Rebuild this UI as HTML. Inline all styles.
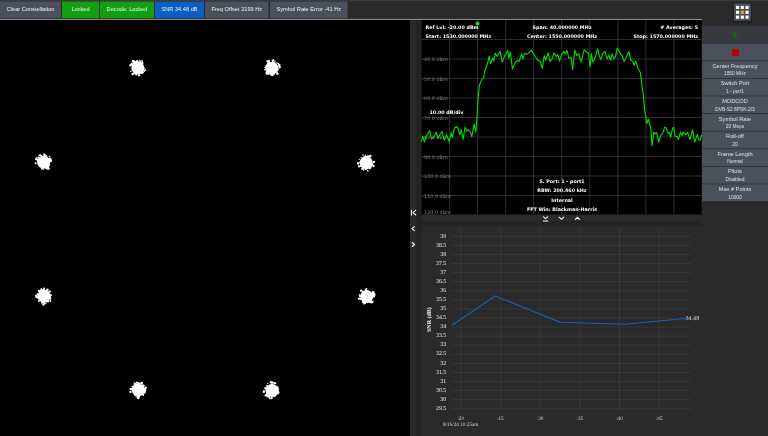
<!DOCTYPE html>
<html><head><meta charset="utf-8"><title>DVB-S2 Demodulator</title>
<style>
html,body{margin:0;padding:0;}
body{width:768px;height:436px;overflow:hidden;background:#2a2a2a;position:relative;font-family:"Liberation Sans",sans-serif;}
svg{position:absolute;left:0;top:0;will-change:transform;}
svg text{text-rendering:geometricPrecision;}
#ov{position:absolute;left:0;top:0;width:768px;height:436px;will-change:transform;}
#ov div{position:absolute;text-align:center;white-space:nowrap;}
.bt{top:1px;height:17px;line-height:17px;font-size:5.65px;color:#f2f2f2;}
.t1{left:702px;width:66px;font-size:5.65px;line-height:7px;height:7px;color:#e0e0e0;}
.t2{left:702px;width:66px;font-size:4.85px;line-height:5px;height:5px;color:#e0e0e0;}
</style></head><body>
<svg width="768" height="436" viewBox="0 0 768 436">
<rect x="0" y="0" width="768" height="436" fill="#2a2a2a"/>
<rect x="0" y="0" width="768" height="0.65" fill="#464646"/>
<!-- toolbar buttons -->
<rect x="0" y="1.5" width="61.0" height="16.6" fill="#4a505c"/>
<rect x="62" y="1.5" width="37.0" height="16.6" fill="#12a012"/>
<rect x="100" y="1.5" width="54.0" height="16.6" fill="#12a012"/>
<rect x="155" y="1.5" width="49.0" height="16.6" fill="#0a5fc0"/>
<rect x="205" y="1.5" width="63.6" height="16.6" fill="#4a505c"/>
<rect x="270" y="1.5" width="77.5" height="16.6" fill="#4a505c"/>
<rect x="0" y="18.9" width="702" height="1.1" fill="#888"/>
<!-- panels -->
<rect x="0" y="20" width="410" height="416" fill="#000"/>
<rect x="416" y="20" width="5.5" height="416" fill="#232323"/>
<rect x="421.5" y="20" width="280.2" height="194.5" fill="#000"/>
<rect x="421" y="221.1" width="281" height="4.5" fill="#232323"/>
<!-- right panel -->
<rect x="733" y="4.6" width="19" height="18" fill="#000" opacity="0.25"/>
<rect x="734" y="3.8" width="16.9" height="16.9" fill="#4a505c"/>
<rect x="702" y="25.90" width="66" height="16.95" fill="#37393e"/>
<rect x="702" y="43.50" width="66" height="16.95" fill="#4a505c"/>
<rect x="702" y="61.10" width="66" height="16.95" fill="#4a505c"/>
<rect x="702" y="78.70" width="66" height="16.95" fill="#4a505c"/>
<rect x="702" y="96.30" width="66" height="16.95" fill="#4a505c"/>
<rect x="702" y="113.90" width="66" height="16.95" fill="#4a505c"/>
<rect x="702" y="131.50" width="66" height="16.95" fill="#4a505c"/>
<rect x="702" y="149.10" width="66" height="16.95" fill="#4a505c"/>
<rect x="702" y="166.70" width="66" height="16.95" fill="#4a505c"/>
<rect x="702" y="184.30" width="66" height="16.95" fill="#4a505c"/>
<!-- constellation -->
<g fill="#fff">
<circle cx="137.8" cy="67.8" r="6.5"/>
<circle cx="134.96" cy="73.48" r="1.02"/>
<circle cx="144.30" cy="70.98" r="0.84"/>
<circle cx="144.50" cy="70.35" r="0.62"/>
<circle cx="132.17" cy="70.29" r="0.66"/>
<circle cx="130.77" cy="71.41" r="0.68"/>
<circle cx="139.05" cy="75.14" r="1.22"/>
<circle cx="131.68" cy="64.58" r="1.23"/>
<circle cx="145.44" cy="70.10" r="0.79"/>
<circle cx="141.67" cy="72.74" r="0.80"/>
<circle cx="140.39" cy="61.93" r="0.98"/>
<circle cx="133.39" cy="62.55" r="0.96"/>
<circle cx="143.47" cy="70.16" r="0.73"/>
<circle cx="134.84" cy="61.47" r="0.80"/>
<circle cx="131.75" cy="64.19" r="0.79"/>
<circle cx="139.89" cy="60.49" r="0.76"/>
<circle cx="131.37" cy="64.55" r="1.17"/>
<circle cx="136.94" cy="61.19" r="1.24"/>
<circle cx="142.93" cy="72.50" r="1.09"/>
<circle cx="141.92" cy="73.62" r="0.63"/>
<circle cx="133.99" cy="61.04" r="0.97"/>
<circle cx="142.57" cy="63.06" r="1.05"/>
<circle cx="131.72" cy="63.70" r="0.90"/>
<circle cx="142.18" cy="60.90" r="0.91"/>
<circle cx="134.65" cy="62.53" r="1.06"/>
<circle cx="132.81" cy="61.19" r="1.13"/>
<circle cx="136.31" cy="74.53" r="1.03"/>
<circle cx="144.79" cy="68.80" r="0.71"/>
<circle cx="142.35" cy="71.92" r="1.10"/>
<circle cx="142.32" cy="72.57" r="0.85"/>
<circle cx="142.07" cy="63.33" r="0.89"/>
<circle cx="130.15" cy="65.34" r="1.13"/>
<circle cx="142.16" cy="62.79" r="0.87"/>
<circle cx="132.73" cy="74.03" r="1.22"/>
<circle cx="141.53" cy="73.00" r="0.75"/>
<circle cx="271.7" cy="68.2" r="6.5"/>
<circle cx="272.44" cy="75.28" r="0.98"/>
<circle cx="271.22" cy="74.19" r="0.87"/>
<circle cx="266.73" cy="73.55" r="1.22"/>
<circle cx="269.08" cy="61.51" r="1.00"/>
<circle cx="268.96" cy="62.72" r="1.18"/>
<circle cx="273.20" cy="60.33" r="1.12"/>
<circle cx="266.30" cy="72.53" r="0.67"/>
<circle cx="267.62" cy="63.61" r="0.64"/>
<circle cx="273.33" cy="74.36" r="0.82"/>
<circle cx="277.38" cy="70.15" r="0.70"/>
<circle cx="277.19" cy="72.27" r="0.62"/>
<circle cx="276.92" cy="62.94" r="0.70"/>
<circle cx="271.60" cy="75.00" r="0.84"/>
<circle cx="277.40" cy="73.75" r="1.25"/>
<circle cx="264.75" cy="69.71" r="0.66"/>
<circle cx="277.14" cy="72.27" r="0.77"/>
<circle cx="274.73" cy="62.59" r="0.62"/>
<circle cx="278.58" cy="66.01" r="0.70"/>
<circle cx="265.86" cy="66.58" r="0.94"/>
<circle cx="279.61" cy="67.12" r="1.05"/>
<circle cx="271.22" cy="75.03" r="0.71"/>
<circle cx="272.69" cy="61.04" r="1.11"/>
<circle cx="268.57" cy="73.91" r="1.13"/>
<circle cx="279.63" cy="67.45" r="1.12"/>
<circle cx="274.91" cy="61.20" r="0.75"/>
<circle cx="264.92" cy="67.45" r="0.62"/>
<circle cx="278.24" cy="69.36" r="0.77"/>
<circle cx="268.80" cy="60.53" r="0.89"/>
<circle cx="279.33" cy="65.01" r="1.22"/>
<circle cx="267.41" cy="73.09" r="0.75"/>
<circle cx="273.83" cy="74.31" r="1.01"/>
<circle cx="278.13" cy="63.55" r="0.91"/>
<circle cx="267.21" cy="61.77" r="0.66"/>
<circle cx="267.39" cy="61.35" r="1.11"/>
<circle cx="43.7" cy="162.2" r="6.5"/>
<circle cx="43.71" cy="155.10" r="0.72"/>
<circle cx="45.35" cy="155.64" r="1.12"/>
<circle cx="50.50" cy="160.98" r="0.86"/>
<circle cx="50.94" cy="159.68" r="0.71"/>
<circle cx="48.13" cy="166.75" r="1.19"/>
<circle cx="45.90" cy="156.26" r="1.14"/>
<circle cx="51.15" cy="161.27" r="0.83"/>
<circle cx="37.69" cy="160.30" r="0.61"/>
<circle cx="51.07" cy="160.84" r="0.94"/>
<circle cx="50.10" cy="159.37" r="1.17"/>
<circle cx="46.69" cy="156.44" r="0.76"/>
<circle cx="41.95" cy="168.52" r="0.98"/>
<circle cx="43.29" cy="169.15" r="0.69"/>
<circle cx="49.45" cy="158.55" r="0.90"/>
<circle cx="36.70" cy="158.16" r="0.87"/>
<circle cx="49.92" cy="158.66" r="0.95"/>
<circle cx="37.72" cy="161.31" r="0.89"/>
<circle cx="46.15" cy="167.69" r="1.12"/>
<circle cx="47.02" cy="168.46" r="1.07"/>
<circle cx="37.37" cy="159.85" r="0.94"/>
<circle cx="36.36" cy="159.54" r="0.67"/>
<circle cx="37.59" cy="159.77" r="0.78"/>
<circle cx="44.70" cy="155.10" r="0.97"/>
<circle cx="44.21" cy="154.12" r="0.89"/>
<circle cx="38.25" cy="157.55" r="0.93"/>
<circle cx="41.22" cy="155.61" r="0.95"/>
<circle cx="35.61" cy="163.32" r="1.05"/>
<circle cx="49.53" cy="156.48" r="0.77"/>
<circle cx="36.10" cy="159.22" r="1.15"/>
<circle cx="47.79" cy="166.97" r="0.89"/>
<circle cx="49.58" cy="165.08" r="0.65"/>
<circle cx="39.92" cy="155.37" r="1.18"/>
<circle cx="48.02" cy="168.51" r="1.03"/>
<circle cx="48.70" cy="168.48" r="1.23"/>
<circle cx="366.2" cy="162.6" r="6.5"/>
<circle cx="367.76" cy="170.64" r="0.86"/>
<circle cx="357.95" cy="163.26" r="1.14"/>
<circle cx="369.89" cy="168.54" r="0.94"/>
<circle cx="362.77" cy="168.07" r="0.81"/>
<circle cx="365.15" cy="156.65" r="0.96"/>
<circle cx="360.58" cy="164.81" r="0.82"/>
<circle cx="361.09" cy="157.56" r="0.64"/>
<circle cx="373.98" cy="161.87" r="1.23"/>
<circle cx="371.43" cy="166.64" r="0.63"/>
<circle cx="367.40" cy="156.09" r="0.68"/>
<circle cx="359.05" cy="166.40" r="1.13"/>
<circle cx="365.86" cy="168.93" r="1.20"/>
<circle cx="359.33" cy="159.33" r="0.66"/>
<circle cx="373.29" cy="165.28" r="0.88"/>
<circle cx="373.53" cy="166.19" r="1.01"/>
<circle cx="368.17" cy="156.73" r="1.16"/>
<circle cx="373.49" cy="165.85" r="0.89"/>
<circle cx="362.34" cy="168.76" r="1.20"/>
<circle cx="365.49" cy="168.86" r="0.94"/>
<circle cx="366.65" cy="168.84" r="0.70"/>
<circle cx="372.34" cy="164.61" r="0.80"/>
<circle cx="363.58" cy="169.89" r="0.79"/>
<circle cx="359.79" cy="162.60" r="0.83"/>
<circle cx="372.73" cy="163.35" r="0.61"/>
<circle cx="365.43" cy="155.37" r="0.72"/>
<circle cx="358.15" cy="163.89" r="0.67"/>
<circle cx="369.13" cy="156.25" r="0.92"/>
<circle cx="369.70" cy="156.65" r="0.93"/>
<circle cx="363.05" cy="154.96" r="0.82"/>
<circle cx="369.97" cy="155.97" r="1.01"/>
<circle cx="360.58" cy="166.43" r="0.64"/>
<circle cx="370.42" cy="167.09" r="1.08"/>
<circle cx="365.98" cy="168.97" r="0.65"/>
<circle cx="370.54" cy="155.88" r="1.04"/>
<circle cx="44.1" cy="296.2" r="6.5"/>
<circle cx="42.79" cy="302.63" r="0.79"/>
<circle cx="37.94" cy="297.80" r="0.89"/>
<circle cx="43.42" cy="304.38" r="1.23"/>
<circle cx="37.82" cy="294.29" r="1.23"/>
<circle cx="41.61" cy="302.55" r="0.60"/>
<circle cx="38.88" cy="301.00" r="0.93"/>
<circle cx="46.27" cy="303.02" r="0.60"/>
<circle cx="43.55" cy="302.38" r="0.86"/>
<circle cx="49.95" cy="297.77" r="0.80"/>
<circle cx="44.89" cy="303.50" r="0.94"/>
<circle cx="44.13" cy="288.69" r="1.07"/>
<circle cx="49.10" cy="291.45" r="0.81"/>
<circle cx="50.41" cy="295.59" r="1.07"/>
<circle cx="40.31" cy="291.42" r="1.14"/>
<circle cx="49.89" cy="291.53" r="1.08"/>
<circle cx="46.51" cy="290.36" r="0.94"/>
<circle cx="36.18" cy="295.98" r="1.12"/>
<circle cx="47.49" cy="289.69" r="1.18"/>
<circle cx="40.99" cy="289.27" r="0.75"/>
<circle cx="50.29" cy="297.43" r="0.83"/>
<circle cx="50.36" cy="301.05" r="0.96"/>
<circle cx="38.93" cy="290.85" r="1.04"/>
<circle cx="38.11" cy="296.60" r="1.12"/>
<circle cx="44.02" cy="289.04" r="0.95"/>
<circle cx="40.78" cy="291.02" r="1.08"/>
<circle cx="44.01" cy="302.37" r="0.77"/>
<circle cx="43.26" cy="289.78" r="1.08"/>
<circle cx="51.15" cy="295.12" r="0.85"/>
<circle cx="36.59" cy="297.20" r="1.10"/>
<circle cx="38.55" cy="291.19" r="0.65"/>
<circle cx="48.06" cy="301.46" r="1.08"/>
<circle cx="41.65" cy="303.08" r="0.61"/>
<circle cx="50.24" cy="298.66" r="1.04"/>
<circle cx="41.42" cy="289.14" r="0.79"/>
<circle cx="366.7" cy="296.6" r="6.5"/>
<circle cx="359.67" cy="295.87" r="0.90"/>
<circle cx="372.62" cy="302.06" r="0.73"/>
<circle cx="374.78" cy="295.48" r="0.61"/>
<circle cx="359.07" cy="298.61" r="1.23"/>
<circle cx="360.41" cy="298.67" r="0.74"/>
<circle cx="372.81" cy="294.43" r="0.98"/>
<circle cx="371.23" cy="302.20" r="1.22"/>
<circle cx="372.00" cy="302.44" r="0.93"/>
<circle cx="372.47" cy="291.63" r="0.75"/>
<circle cx="372.40" cy="292.33" r="0.62"/>
<circle cx="373.83" cy="296.76" r="0.89"/>
<circle cx="364.67" cy="302.59" r="0.82"/>
<circle cx="363.50" cy="303.86" r="0.60"/>
<circle cx="366.74" cy="288.67" r="0.68"/>
<circle cx="373.54" cy="293.19" r="1.19"/>
<circle cx="365.00" cy="303.24" r="0.86"/>
<circle cx="374.05" cy="296.54" r="0.83"/>
<circle cx="360.73" cy="299.50" r="0.63"/>
<circle cx="373.06" cy="301.32" r="0.79"/>
<circle cx="372.74" cy="294.01" r="0.77"/>
<circle cx="360.28" cy="296.16" r="0.84"/>
<circle cx="374.43" cy="294.42" r="1.13"/>
<circle cx="361.19" cy="290.66" r="1.21"/>
<circle cx="359.41" cy="294.27" r="0.63"/>
<circle cx="365.92" cy="289.61" r="1.09"/>
<circle cx="362.60" cy="291.35" r="0.63"/>
<circle cx="372.34" cy="293.81" r="0.91"/>
<circle cx="362.99" cy="302.16" r="1.08"/>
<circle cx="373.23" cy="295.62" r="1.03"/>
<circle cx="364.41" cy="303.51" r="0.86"/>
<circle cx="369.86" cy="302.13" r="0.74"/>
<circle cx="372.63" cy="292.62" r="0.74"/>
<circle cx="373.59" cy="291.99" r="0.89"/>
<circle cx="370.82" cy="301.55" r="0.66"/>
<circle cx="138.2" cy="390.0" r="6.5"/>
<circle cx="134.81" cy="395.20" r="0.76"/>
<circle cx="137.82" cy="397.30" r="1.18"/>
<circle cx="138.19" cy="383.05" r="0.87"/>
<circle cx="131.41" cy="388.96" r="0.82"/>
<circle cx="144.34" cy="392.52" r="1.23"/>
<circle cx="143.23" cy="395.09" r="1.01"/>
<circle cx="142.43" cy="385.07" r="0.78"/>
<circle cx="138.27" cy="396.92" r="0.89"/>
<circle cx="145.82" cy="387.73" r="1.17"/>
<circle cx="144.22" cy="390.83" r="1.06"/>
<circle cx="143.82" cy="385.68" r="0.98"/>
<circle cx="145.10" cy="390.01" r="1.20"/>
<circle cx="141.84" cy="382.91" r="1.23"/>
<circle cx="138.26" cy="396.25" r="0.70"/>
<circle cx="130.71" cy="388.94" r="1.21"/>
<circle cx="136.88" cy="382.63" r="1.10"/>
<circle cx="131.19" cy="391.93" r="0.63"/>
<circle cx="139.52" cy="383.60" r="1.20"/>
<circle cx="134.11" cy="384.69" r="0.68"/>
<circle cx="138.12" cy="397.46" r="1.05"/>
<circle cx="142.89" cy="393.99" r="0.94"/>
<circle cx="132.22" cy="386.57" r="0.75"/>
<circle cx="133.35" cy="386.43" r="0.80"/>
<circle cx="130.24" cy="392.01" r="1.02"/>
<circle cx="143.48" cy="385.27" r="0.75"/>
<circle cx="138.35" cy="398.21" r="1.06"/>
<circle cx="136.07" cy="395.66" r="0.92"/>
<circle cx="135.02" cy="383.80" r="0.77"/>
<circle cx="134.17" cy="382.94" r="0.75"/>
<circle cx="144.82" cy="391.44" r="0.87"/>
<circle cx="135.55" cy="384.12" r="1.12"/>
<circle cx="137.71" cy="382.86" r="0.73"/>
<circle cx="144.80" cy="388.74" r="1.13"/>
<circle cx="138.98" cy="396.46" r="1.09"/>
<circle cx="272.0" cy="390.4" r="6.5"/>
<circle cx="269.72" cy="398.27" r="0.92"/>
<circle cx="274.50" cy="396.41" r="0.87"/>
<circle cx="267.85" cy="383.35" r="0.70"/>
<circle cx="266.91" cy="394.43" r="1.23"/>
<circle cx="275.84" cy="395.16" r="0.64"/>
<circle cx="265.68" cy="395.41" r="1.17"/>
<circle cx="271.10" cy="382.15" r="1.21"/>
<circle cx="268.93" cy="396.05" r="1.21"/>
<circle cx="271.86" cy="384.33" r="1.03"/>
<circle cx="267.04" cy="395.14" r="0.82"/>
<circle cx="274.92" cy="395.65" r="0.78"/>
<circle cx="267.12" cy="396.99" r="0.68"/>
<circle cx="278.31" cy="388.96" r="0.83"/>
<circle cx="275.43" cy="383.29" r="0.88"/>
<circle cx="278.75" cy="392.56" r="0.84"/>
<circle cx="277.64" cy="387.28" r="0.84"/>
<circle cx="276.84" cy="386.74" r="0.87"/>
<circle cx="274.94" cy="383.22" r="0.63"/>
<circle cx="278.00" cy="391.73" r="1.20"/>
<circle cx="271.66" cy="398.11" r="1.18"/>
<circle cx="268.48" cy="396.02" r="1.22"/>
<circle cx="267.10" cy="385.97" r="1.07"/>
<circle cx="269.31" cy="396.46" r="0.60"/>
<circle cx="272.29" cy="382.30" r="1.01"/>
<circle cx="277.67" cy="388.29" r="0.75"/>
<circle cx="263.90" cy="391.67" r="1.22"/>
<circle cx="267.03" cy="394.70" r="0.88"/>
<circle cx="263.87" cy="390.73" r="0.72"/>
<circle cx="274.50" cy="383.12" r="1.13"/>
<circle cx="273.06" cy="383.08" r="0.81"/>
<circle cx="269.11" cy="396.59" r="1.11"/>
<circle cx="277.67" cy="393.47" r="1.09"/>
<circle cx="272.10" cy="396.55" r="0.62"/>
<circle cx="265.62" cy="388.21" r="1.24"/>
</g>
<!-- spectrum grid -->
<g stroke="#3a3a3a" stroke-width="0.8" fill="none">
<line x1="449.55" y1="20.0" x2="449.55" y2="214.5"/>
<line x1="477.60" y1="20.0" x2="477.60" y2="214.5"/>
<line x1="505.65" y1="20.0" x2="505.65" y2="214.5"/>
<line x1="533.70" y1="20.0" x2="533.70" y2="214.5"/>
<line x1="561.75" y1="20.0" x2="561.75" y2="214.5"/>
<line x1="589.80" y1="20.0" x2="589.80" y2="214.5"/>
<line x1="617.85" y1="20.0" x2="617.85" y2="214.5"/>
<line x1="645.90" y1="20.0" x2="645.90" y2="214.5"/>
<line x1="673.95" y1="20.0" x2="673.95" y2="214.5"/>
<line x1="421.5" y1="39.50" x2="702.0" y2="39.50"/>
<line x1="421.5" y1="59.00" x2="702.0" y2="59.00"/>
<line x1="421.5" y1="78.50" x2="702.0" y2="78.50"/>
<line x1="421.5" y1="98.00" x2="702.0" y2="98.00"/>
<line x1="421.5" y1="117.50" x2="702.0" y2="117.50"/>
<line x1="421.5" y1="137.00" x2="702.0" y2="137.00"/>
<line x1="421.5" y1="156.50" x2="702.0" y2="156.50"/>
<line x1="421.5" y1="176.00" x2="702.0" y2="176.00"/>
<line x1="421.5" y1="195.50" x2="702.0" y2="195.50"/>
</g>
<g font-family="DejaVu Sans, Liberation Sans, sans-serif" font-size="4.9" fill="#7c7c7c">
<text x="422.3" y="61.4">-40.0 dBm</text>
<text x="422.3" y="80.9">-50.0 dBm</text>
<text x="422.3" y="100.4">-60.0 dBm</text>
<text x="422.3" y="119.9">-70.0 dBm</text>
<text x="422.3" y="139.4">-80.0 dBm</text>
<text x="422.3" y="158.9">-90.0 dBm</text>
<text x="422.3" y="178.4">-100.0 dBm</text>
<text x="422.3" y="197.9">-110.0 dBm</text>
<text x="422.3" y="213.5">-120.0 dBm</text>
</g>
<polyline points="421.4,141.7 422.8,136.1 424.4,142.1 426.0,136.6 427.8,133.9 429.6,130.6 431.5,138.9 433.8,137.5 436.1,132.0 437.9,138.4 439.7,134.8 442.0,131.6 444.3,140.3 446.6,134.8 449.4,141.7 451.2,132.5 452.1,137.5 454.4,128.3 456.7,126.5 458.1,128.3 459.9,134.8 461.3,129.7 463.1,139.4 465.1,127.0 466.8,131.1 468.2,129.7 470.0,131.6 471.8,136.6 474.1,124.2 475.8,132.0 476.8,119.9 478.2,96.8 479.5,84.9 481.9,79.4 483.7,77.6 484.7,71.2 487.4,63.8 489.2,56.1 490.5,63.8 492.9,58.3 493.8,61.1 495.3,53.2 497.1,56.5 500.2,51.4 502.1,62.0 504.8,55.6 507.9,50.6 508.8,58.3 510.3,51.9 512.5,69.3 514.9,62.9 517.3,60.2 519.1,61.6 521.7,53.7 523.1,59.2 524.6,53.2 527.2,54.3 531.4,50.1 534.1,54.7 537.7,60.2 540.5,61.6 542.3,68.4 544.2,55.6 545.6,60.2 548.2,52.8 550.0,61.6 552.4,58.3 553.9,52.8 556.1,56.5 557.9,54.7 559.4,61.1 561.6,54.3 564.0,51.4 565.2,53.7 567.1,50.6 568.9,58.3 571.1,57.4 572.6,69.7 574.9,50.1 576.8,55.6 578.6,53.7 581.2,62.0 584.1,49.5 586.3,51.9 588.5,52.8 590.0,66.6 591.4,53.7 592.7,61.6 594.6,59.2 597.7,48.8 599.5,56.5 601.0,59.2 602.5,53.9 605.0,51.4 607.1,58.9 608.8,55.1 610.6,60.2 612.1,53.9 613.9,58.9 615.6,56.4 617.2,48.1 619.7,52.6 622.2,55.6 624.0,61.4 626.5,56.4 629.0,51.4 630.8,60.2 632.8,61.4 634.1,65.2 635.8,61.4 637.8,67.7 640.4,72.8 641.6,82.9 643.4,95.5 644.6,110.0 645.7,115.5 646.6,123.8 648.4,119.2 649.6,125.1 650.6,127.0 652.1,145.8 653.8,132.0 655.1,133.9 656.5,132.5 658.8,142.1 660.6,135.7 662.9,132.9 664.8,127.0 666.1,127.9 668.0,133.4 669.4,132.5 670.7,137.1 672.6,128.3 673.8,127.4 675.0,136.1 677.2,136.6 678.5,139.4 680.4,132.0 682.2,135.7 683.1,132.0 685.4,134.8 687.7,132.5 690.0,139.4 692.5,129.7 694.8,142.1 697.3,134.3 698.7,139.4 700.1,140.3 701.7,134.8" fill="none" stroke="#00e000" stroke-width="1.1" stroke-linejoin="round"/>
<circle cx="477.5" cy="23.4" r="2" fill="#00ee00"/>
<g font-family="DejaVu Sans, Liberation Sans, sans-serif" font-weight="bold" font-size="4.8" fill="#fff">
<text x="425.5" y="29.4">Ref Lvl: -20.00 dBm</text>
<text x="425.5" y="38.4">Start: 1530.000000 MHz</text>
<text x="562" y="28.6" text-anchor="middle">Span: 40.000000 MHz</text>
<text x="562" y="38.4" text-anchor="middle">Center: 1550.000000 MHz</text>
<text x="698" y="28.6" text-anchor="end"># Averages: 5</text>
<text x="698" y="38.4" text-anchor="end">Stop: 1570.000000 MHz</text>
<text x="429.5" y="114.2">10.00 dB/div</text>
<text x="562" y="182.8" text-anchor="middle">S. Port: 1 - port1</text>
<text x="562" y="192.4" text-anchor="middle">RBW: 200.460 kHz</text>
<text x="562" y="202" text-anchor="middle">Internal</text>
<text x="562" y="211.3" text-anchor="middle">FFT Win: Blackman-Harris</text>
</g>
<!-- splitter icons -->
<g stroke="#fff" stroke-width="1.05" fill="none" stroke-linecap="round" stroke-linejoin="round">
<path d="M411.4 210.1v5M415.8 210.2l-2.8 2.4 2.8 2.4"/>
<path d="M414.3 226.6l-2.3 2 2.3 2"/>
<path d="M412.2 242.5l2.3 2-2.3 2"/>
<path d="M543.5 216.8l2.1 1.9 2.1-1.9M543.4 221h4.4"/>
<path d="M559.2 217.2l2.3 2.1 2.3-2.1"/>
<path d="M575.4 219.4l2.1-2.1 2.1 2.1"/>
</g>
<!-- grid button icon -->
<g fill="#fff">
<rect x="736" y="5.9" width="3.1" height="3.1"/><rect x="740.75" y="5.9" width="3.1" height="3.1"/><rect x="745.5" y="5.9" width="3.1" height="3.1"/>
<rect x="736" y="10.75" width="3.1" height="3.1"/><rect x="740.75" y="10.75" width="3.1" height="3.1" fill="#f5a623"/><rect x="745.5" y="10.75" width="3.1" height="3.1"/>
<rect x="736" y="15.6" width="3.1" height="3.1"/><rect x="740.75" y="15.6" width="3.1" height="3.1"/><rect x="745.5" y="15.6" width="3.1" height="3.1"/>
</g>
<path d="M733 31.2l6 3.8-6 3.8z" fill="#1d5c1d"/>
<rect x="732" y="49" width="7" height="7" fill="#c00000"/>
<!-- SNR chart -->
<g stroke="#3e3e3e" stroke-width="0.7" fill="none">
<line x1="452" y1="236.35" x2="691" y2="236.35"/>
<line x1="452" y1="245.42" x2="691" y2="245.42"/>
<line x1="452" y1="254.49" x2="691" y2="254.49"/>
<line x1="452" y1="263.57" x2="691" y2="263.57"/>
<line x1="452" y1="272.64" x2="691" y2="272.64"/>
<line x1="452" y1="281.71" x2="691" y2="281.71"/>
<line x1="452" y1="290.78" x2="691" y2="290.78"/>
<line x1="452" y1="299.85" x2="691" y2="299.85"/>
<line x1="452" y1="308.93" x2="691" y2="308.93"/>
<line x1="452" y1="318.00" x2="691" y2="318.00"/>
<line x1="452" y1="327.07" x2="691" y2="327.07"/>
<line x1="452" y1="336.14" x2="691" y2="336.14"/>
<line x1="452" y1="345.21" x2="691" y2="345.21"/>
<line x1="452" y1="354.29" x2="691" y2="354.29"/>
<line x1="452" y1="363.36" x2="691" y2="363.36"/>
<line x1="452" y1="372.43" x2="691" y2="372.43"/>
<line x1="452" y1="381.50" x2="691" y2="381.50"/>
<line x1="452" y1="390.57" x2="691" y2="390.57"/>
<line x1="452" y1="399.65" x2="691" y2="399.65"/>
<line x1="452" y1="408.72" x2="691" y2="408.72"/>
<line x1="460.70" y1="228.7" x2="460.70" y2="409.5"/>
<line x1="500.40" y1="228.7" x2="500.40" y2="409.5"/>
<line x1="540.10" y1="228.7" x2="540.10" y2="409.5"/>
<line x1="579.80" y1="228.7" x2="579.80" y2="409.5"/>
<line x1="619.50" y1="228.7" x2="619.50" y2="409.5"/>
<line x1="659.20" y1="228.7" x2="659.20" y2="409.5"/>
</g>
<g font-family="Liberation Serif, serif" font-size="5.95" fill="#eee">
<text x="446.3" y="237.50" text-anchor="end">39</text>
<text x="446.3" y="246.57" text-anchor="end">38.5</text>
<text x="446.3" y="255.64" text-anchor="end">38</text>
<text x="446.3" y="264.72" text-anchor="end">37.5</text>
<text x="446.3" y="273.79" text-anchor="end">37</text>
<text x="446.3" y="282.86" text-anchor="end">36.5</text>
<text x="446.3" y="291.93" text-anchor="end">36</text>
<text x="446.3" y="301.00" text-anchor="end">35.5</text>
<text x="446.3" y="310.08" text-anchor="end">35</text>
<text x="446.3" y="319.15" text-anchor="end">34.5</text>
<text x="446.3" y="328.22" text-anchor="end">34</text>
<text x="446.3" y="337.29" text-anchor="end">33.5</text>
<text x="446.3" y="346.36" text-anchor="end">33</text>
<text x="446.3" y="355.44" text-anchor="end">32.5</text>
<text x="446.3" y="364.51" text-anchor="end">32</text>
<text x="446.3" y="373.58" text-anchor="end">31.5</text>
<text x="446.3" y="382.65" text-anchor="end">31</text>
<text x="446.3" y="391.72" text-anchor="end">30.5</text>
<text x="446.3" y="400.80" text-anchor="end">30</text>
<text x="446.3" y="409.87" text-anchor="end">29.5</text>
</g>
<g font-family="Liberation Serif, serif" font-size="5.2" fill="#d8d8d8">
<text x="460.7" y="420" text-anchor="middle">:20</text>
<text x="500.4" y="420" text-anchor="middle">:15</text>
<text x="540.1" y="420" text-anchor="middle">:30</text>
<text x="579.8" y="420" text-anchor="middle">:35</text>
<text x="619.5" y="420" text-anchor="middle">:40</text>
<text x="659.2" y="420" text-anchor="middle">:45</text>
<text x="460.7" y="425.5" text-anchor="middle">8/16/24 10:25am</text>
</g>
<text transform="translate(431.2,319.6) rotate(-90)" font-family="Liberation Serif, serif" font-weight="bold" font-size="6" fill="#eee" text-anchor="middle">SNR (dB)</text>
<polyline points="452.4,325 495.2,296 560.3,322.3 624.7,324.3 687.6,318.3" fill="none" stroke="#1562b4" stroke-width="1.05" stroke-linejoin="round"/>
<text x="685.5" y="320.2" font-family="Liberation Serif, serif" font-size="6.1" fill="#ddd">34.48</text>
</svg>
<div id="ov">
<div class="bt" style="left:0px;width:61.0px">Clear Constellation</div>
<div class="bt" style="left:62px;width:37.0px">Locked</div>
<div class="bt" style="left:100px;width:54.0px">Decode: Locked</div>
<div class="bt" style="left:155px;width:49.0px">SNR 34.48 dB</div>
<div class="bt" style="left:205px;width:63.6px">Freq Offset 2193 Hz</div>
<div class="bt" style="left:270px;width:77.5px">Symbol Rate Error -41 Hz</div>
<div class="t1" style="top:62.80px">Center Frequency</div>
<div class="t1" style="top:80.40px">Switch Port</div>
<div class="t1" style="top:98.00px">MODCOD</div>
<div class="t1" style="top:115.60px">Symbol Rate</div>
<div class="t1" style="top:133.20px">Roll-off</div>
<div class="t1" style="top:150.80px">Frame Length</div>
<div class="t1" style="top:168.40px">Pilots</div>
<div class="t1" style="top:186.00px">Max # Points</div>
<div class="t2" style="top:71.40px">1550 MHz</div>
<div class="t2" style="top:89.00px">1 - port1</div>
<div class="t2" style="top:106.60px">DVB-S2 8PSK-2/3</div>
<div class="t2" style="top:124.20px">20 Msps</div>
<div class="t2" style="top:141.80px">20</div>
<div class="t2" style="top:159.40px">Normal</div>
<div class="t2" style="top:177.00px">Disabled</div>
<div class="t2" style="top:194.60px">10000</div>
</div>
</body></html>
